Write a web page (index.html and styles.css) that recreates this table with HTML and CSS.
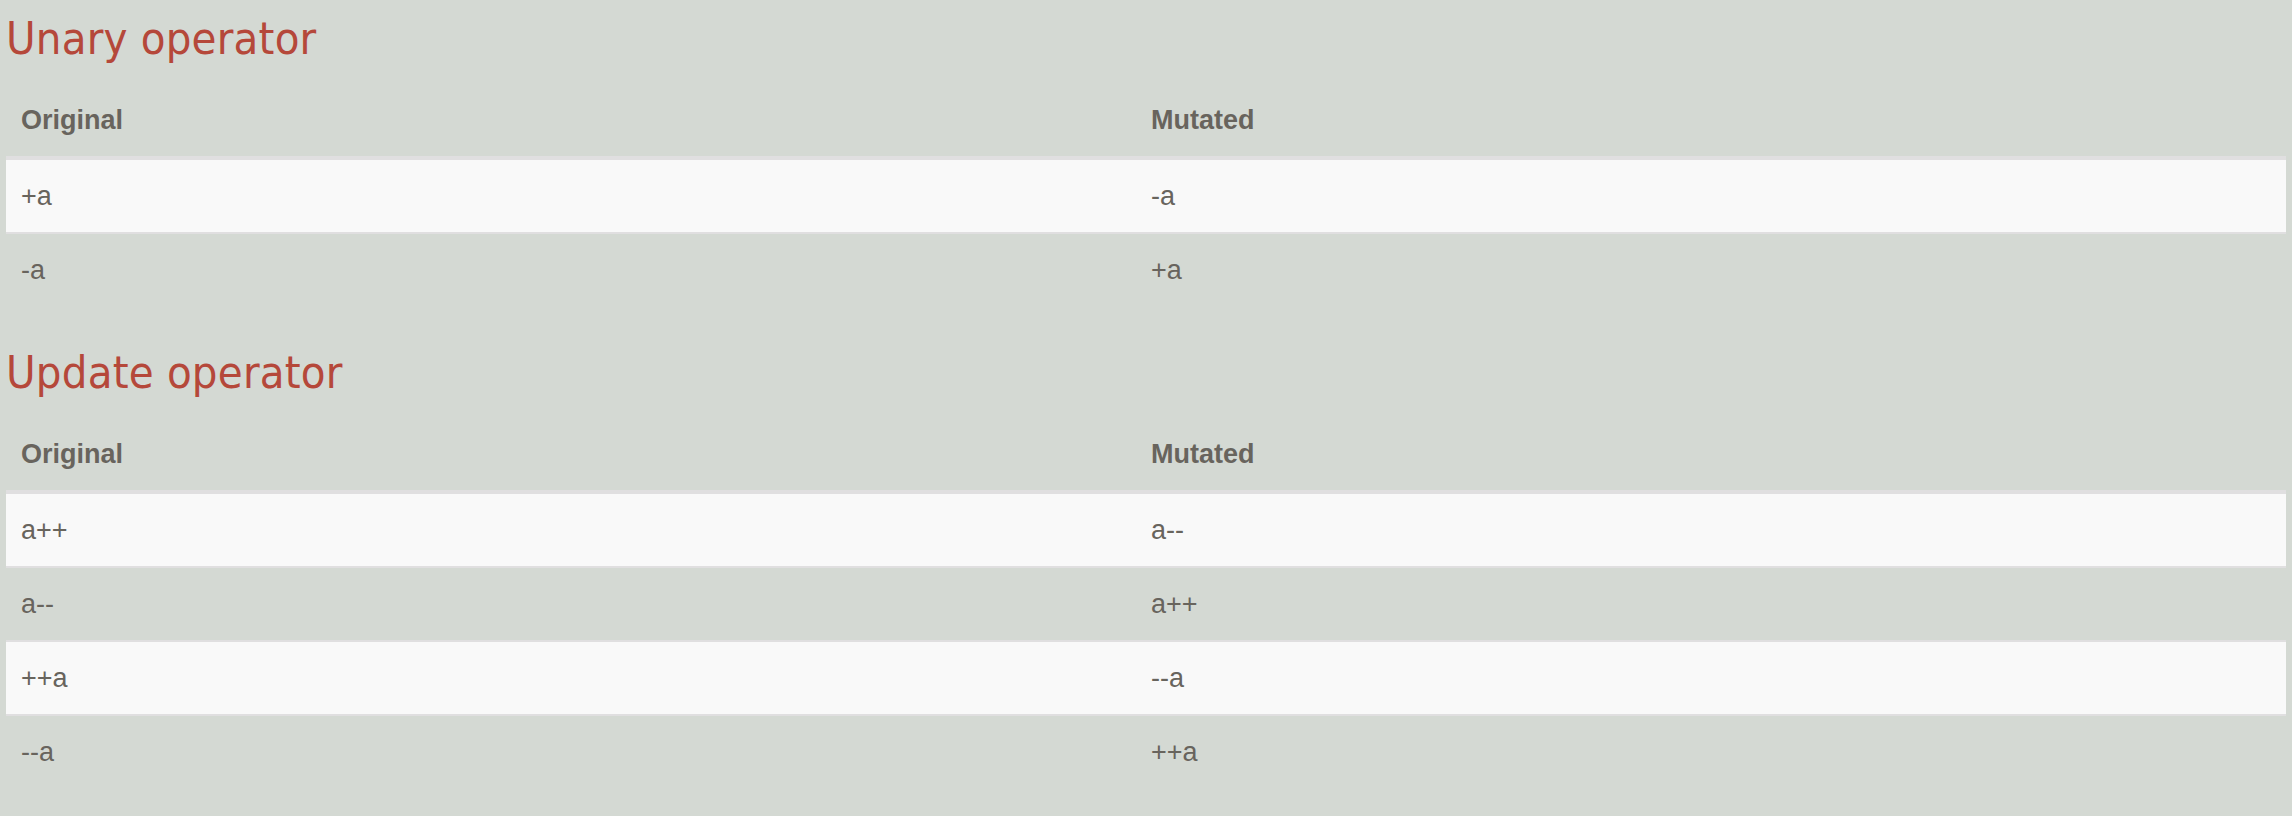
FILE: index.html
```html
<!DOCTYPE html>
<html lang="en">
<head>
<meta charset="utf-8">
<title>Mutation operators</title>
<link rel="stylesheet" href="styles.css">
</head>
<body>
<section class="section">
  <h2 class="title">Unary operator</h2>
  <table class="ops">
    <thead>
      <tr><th class="col-orig">Original</th><th>Mutated</th></tr>
    </thead>
    <tbody>
      <tr><td>+a</td><td>-a</td></tr>
      <tr><td>-a</td><td>+a</td></tr>
    </tbody>
  </table>
</section>
<section class="section">
  <h2 class="title">Update operator</h2>
  <table class="ops">
    <thead>
      <tr><th class="col-orig">Original</th><th>Mutated</th></tr>
    </thead>
    <tbody>
      <tr><td>a++</td><td>a--</td></tr>
      <tr><td>a--</td><td>a++</td></tr>
      <tr><td>++a</td><td>--a</td></tr>
      <tr><td>--a</td><td>++a</td></tr>
    </tbody>
  </table>
</section>
</body>
</html>
```
FILE: styles.css
```css
html, body {
  margin: 0;
  padding: 0;
  background: #d4d9d3;
}

body {
  padding: 0 6px;
  font-family: "Liberation Sans", Arial, sans-serif;
  color: #68645d;
}

.section + .section {
  margin-top: 40px;
}

.title {
  margin: 0 0 19px;
  padding-top: 12px;
  font-family: "DejaVu Sans Condensed", "DejaVu Sans", sans-serif;
  font-stretch: condensed;
  font-weight: normal;
  font-size: 45px;
  line-height: 53px;
  letter-spacing: 0.2px;
  color: #b5483a;
}

.section + .section .title {
  padding-top: 0;
}

.ops {
  width: 100%;
  border-collapse: separate;
  border-spacing: 0;
  font-size: 27px;
  line-height: 30px;
}

.ops th,
.ops td {
  padding: 21px 15px;
  text-align: left;
  vertical-align: middle;
}

.ops th {
  font-weight: bold;
  border-bottom: 2px solid #e0dfe0;
}

.col-orig {
  width: 49.56%;
}

.ops tbody tr:nth-child(odd) td {
  background: #f9f9f9;
  border-top: 2px solid #e0dfe0;
  border-bottom: 2px solid #e0dfe0;
}
```
